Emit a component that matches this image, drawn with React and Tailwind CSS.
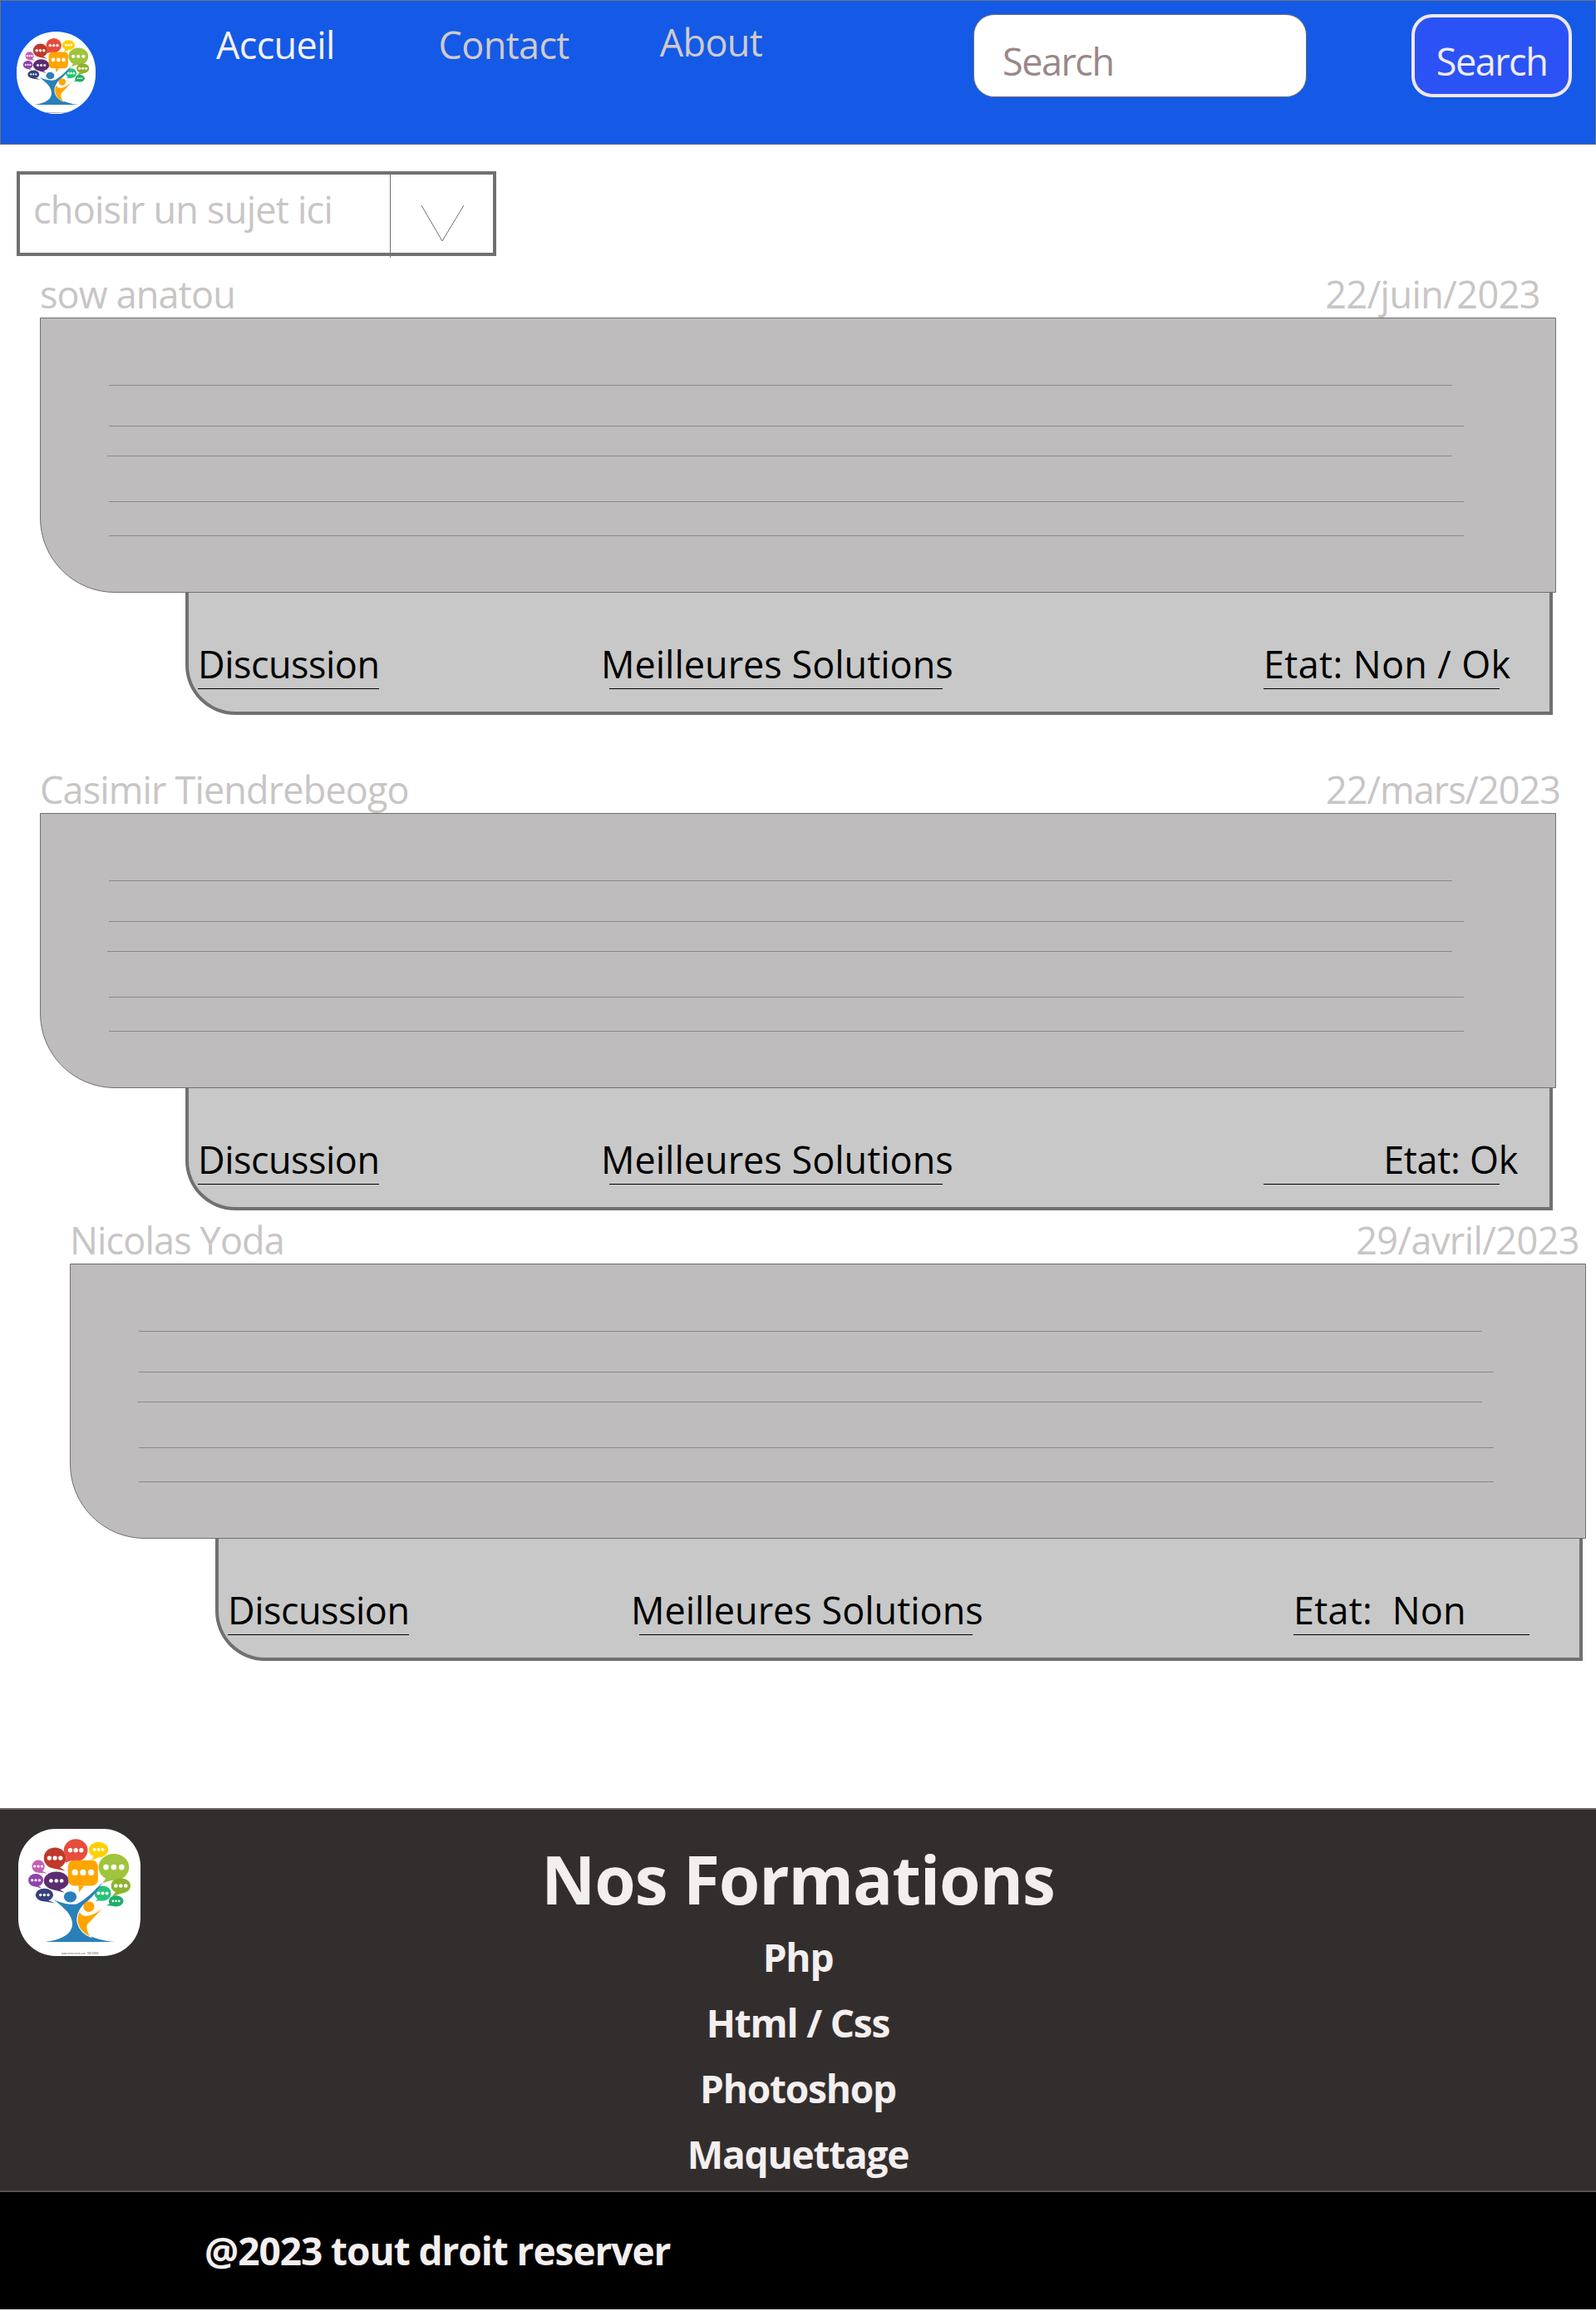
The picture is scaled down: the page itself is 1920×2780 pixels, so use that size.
const BUBBLES = [
  { cx: 140, cy: 225, rx: 23, ry: 23, fill: '#c45fb4', tail: 'M150,240 L172,250 L140,248 Z', r: 5, gap: 13 },
  { cx: 131, cy: 275, rx: 27, ry: 23, fill: '#8e44ad', tail: 'M135,290 L152,304 L120,295 Z', r: 5, gap: 13 },
  { cx: 205, cy: 277, rx: 45, ry: 33, fill: '#5b2c6f', tail: 'M205,300 L235,320 L190,308 Z', r: 7, gap: 19 },
  { cx: 162, cy: 328, rx: 32, ry: 23, fill: '#34427a', tail: 'M170,345 L200,358 L155,350 Z', r: 5, gap: 14 },
  { cx: 200, cy: 195, rx: 40, ry: 38, fill: '#c0392b', tail: 'M212,225 L238,242 L195,232 Z', r: 8, gap: 20 },
  { cx: 275, cy: 167, rx: 43, ry: 40, fill: '#e74c3c', tail: 'M240,190 L238,212 L262,203 Z', r: 8, gap: 20 },
  { cx: 357, cy: 165, rx: 35, ry: 28, fill: '#ffd000', tail: 'M340,185 L332,204 L358,192 Z', r: 6, gap: 15 },
  { cx: 412, cy: 228, rx: 55, ry: 48, fill: '#a0c43c', tail: 'M385,265 L372,285 L415,272 Z', r: 10, gap: 28 },
  { cx: 437, cy: 295, rx: 35, ry: 28, fill: '#8db32e', tail: 'M420,315 L405,335 L440,322 Z', r: 7, gap: 18 },
  { cx: 372, cy: 322, rx: 30, ry: 27, fill: '#27c27a', tail: 'M360,340 L345,350 L375,348 Z', r: 6, gap: 15 },
  { cx: 420, cy: 350, rx: 27, ry: 20, fill: '#1fae66', tail: 'M400,358 L385,366 L412,368 Z', r: 4, gap: 11 },
];

function Logo() {
  return (
    <svg viewBox="68 90 440 458" preserveAspectRatio="none" className="w-full h-full">
      {BUBBLES.map((b) => (
        <g key={b.fill}>
          <path d={b.tail} fill={b.fill} />
          <ellipse cx={b.cx} cy={b.cy} rx={b.rx} ry={b.ry} fill={b.fill} />
          {[-1, 0, 1].map((i) => (
            <circle key={i} cx={b.cx + i * b.gap} cy={b.cy} r={b.r} fill="#ffffff" />
          ))}
        </g>
      ))}
      <path d="M285,295 L287,318 L305,295 Z" fill="#ffa500" />
      <rect x="247" y="203" width="108" height="92" rx="22" fill="#ffa500" />
      {[-1, 0, 1].map((i) => (
        <circle key={i} cx={301 + i * 29} cy={247} r="11" fill="#ffffff" />
      ))}
      <path
        d="M165,497 C215,490 255,475 262,440 C268,405 235,375 195,345 C225,358 255,365 280,360 C310,345 345,310 372,282 C350,320 325,345 300,365 C285,385 278,400 280,425 C285,460 330,488 415,497 Z"
        fill="#2980b9"
      />
      <ellipse cx="255" cy="335" rx="23" ry="20" fill="#2980b9" />
      <ellipse cx="322" cy="370" rx="20" ry="19" fill="#ffa500" />
      <path
        d="M395,345 C375,375 345,398 318,402 C300,404 292,398 290,385 C280,400 278,420 282,430 C288,455 305,470 330,480 C320,465 312,450 318,435 C330,420 370,385 395,345 Z"
        fill="#ffa500"
        stroke="#ffffff"
        strokeWidth="3"
      />
      <text x="290" y="543" textAnchor="middle" fontSize="8" fill="#444444">www.shutterstock.com · 784192894</text>
    </svg>
  );
}

function Label({ text, textClass, boxClass }) {
  return (
    <div className={`shrink-0 ${boxClass}`}>
      <p className={`text-[45px] font-medium leading-[60px] whitespace-nowrap text-black ${textClass}`}>{text}</p>
      <div className="h-px bg-black -mt-px" />
    </div>
  );
}

function Post({ name, date, etat, etatClass, outerClass, dateClass }) {
  const lines = ['mt-0 ml-[82px] w-[1616px]', 'mt-[48px] ml-[82px] w-[1630px]', 'mt-[35px] ml-[80px] w-[1618px]', 'mt-[54px] ml-[82px] w-[1630px]', 'mt-[40px] ml-[82px] w-[1630px]'];
  return (
    <section className={`w-[1824px] ${outerClass}`}>
      <div className="h-[60px] flex justify-between text-[45px] tracking-[-0.85px] leading-[63px] text-[#c8c5c5] whitespace-nowrap">
        <span>{name}</span>
        <span className={dateClass}>{date}</span>
      </div>
      <div className="h-[331px] pt-[80px] bg-[#bebcbc] border border-[#707070] rounded-bl-[90px]">
        {lines.map((l) => (
          <div key={l} className={`h-px bg-[#8a8888] ${l}`} />
        ))}
      </div>
      <div className="ml-[175px] w-[1645px] h-[147px] flex pl-[11px] pt-[56px] bg-[#c8c8c8] border-l-4 border-r-4 border-b-4 border-[#707070] rounded-bl-[60px]">
        <Label text="Discussion" textClass="tracking-[-0.5px]" boxClass="w-[218px]" />
        <Label text="Meilleures Solutions" textClass="-ml-[10px] tracking-[0px]" boxClass="ml-[277px] w-[401px]" />
        <Label text={etat} textClass={etatClass} boxClass="ml-[386px] w-[284px]" />
      </div>
    </section>
  );
}

export default function App() {
  return (
    <div className="w-[1920px] h-[2780px] bg-white font-['Open_Sans',sans-serif] overflow-hidden">
      <header className="h-[174px] flex items-start bg-[#145ae6] border border-[#707070] text-[45px] tracking-[-0.65px] leading-[60px]">
        <div className="ml-[19px] mt-[37px] w-[95px] h-[99px] rounded-full bg-white overflow-hidden shrink-0">
          <Logo />
        </div>
        <a className="ml-[145px] mt-[23px] text-[#f5f0f0]">Accueil</a>
        <a className="ml-[125px] mt-[23px] text-[#cfcaca]">Contact</a>
        <a className="ml-[109px] mt-[20px] text-[#cfcaca]">About</a>
        <div className="ml-auto mr-[28px] mt-[16px] flex gap-[126px] tracking-[-1.5px]">
          <input
            placeholder="Search"
            className="w-[401px] h-[100px] px-[34px] pt-[13px] rounded-[25px] bg-white border border-[#707070] text-[45px] placeholder:text-[#998888] outline-none"
          />
          <button className="w-[193px] h-[100px] pt-[13px] rounded-[25px] bg-[#2b52f5] border-4 border-[#f0e8e8] text-[#f0ecec]">
            Search
          </button>
        </div>
      </header>

      <main>
        <div className="ml-[20px] mt-[32px] w-[577px] h-[102px] flex border-4 border-[#707070]">
          <p className="w-[445px] pl-[16px] pt-[12px] text-[45px] tracking-[-0.75px] leading-[60px] text-[#c8c5c5] whitespace-nowrap">choisir un sujet ici</p>
          <div className="w-px bg-[#707070] -mb-[6px]" />
          <svg viewBox="0 0 54 46" className="ml-[36px] mt-[36px] w-[54px] h-[46px]">
            <path d="M1,1 L26,44 L52,1" fill="none" stroke="#707070" strokeWidth="1" />
          </svg>
        </div>

        <Post
          name="sow anatou"
          date="22/juin/2023"
          etat="Etat: Non / Ok"
          etatClass="tracking-[0.35px]"
          outerClass="ml-[48px] mt-[14px]"
          dateClass="mr-[19px] tracking-[-0.55px]"
        />
        <Post
          name="Casimir Tiendrebeogo"
          date="22/mars/2023"
          etat="Etat: Ok"
          etatClass="text-right w-[306px] tracking-[-0.3px]"
          outerClass="ml-[48px] mt-[58px]"
          dateClass="-mr-[5px] tracking-[-1px]"
        />
        <Post
          name="Nicolas Yoda"
          date="29/avril/2023"
          etat="Etat:  Non"
          etatClass="whitespace-pre tracking-[0.2px]"
          outerClass="ml-[84px] mt-[4px]"
          dateClass="mr-[8px] tracking-[-0.55px]"
        />
      </main>

      <footer className="mt-[177px]">
        <div className="h-[460px] grid grid-cols-[1fr_auto_1fr] bg-[#332e2e] border-t-2 border-[#666666] text-[#f4efef] text-center">
          <div className="ml-[22px] mt-[23px] w-[147px] h-[153px] rounded-[45px] bg-white overflow-hidden">
            <Logo />
          </div>
          <div className="pt-[28px]">
            <h2 className="text-[80px] tracking-[-1.1px] leading-[110px] font-bold whitespace-nowrap">Nos Formations</h2>
            <ul className="text-[46px] tracking-[-1.2px] leading-[79px] font-bold">
              <li>Php</li>
              <li>Html / Css</li>
              <li>Photoshop</li>
              <li>Maquettage</li>
            </ul>
          </div>
        </div>
        <div className="h-[143px] flex items-center pl-[246px] bg-black border-t-2 border-[#555555] text-[#f4efef] text-[46px] tracking-[-1.05px] font-bold">
          @2023 tout droit reserver
        </div>
      </footer>
    </div>
  );
}
